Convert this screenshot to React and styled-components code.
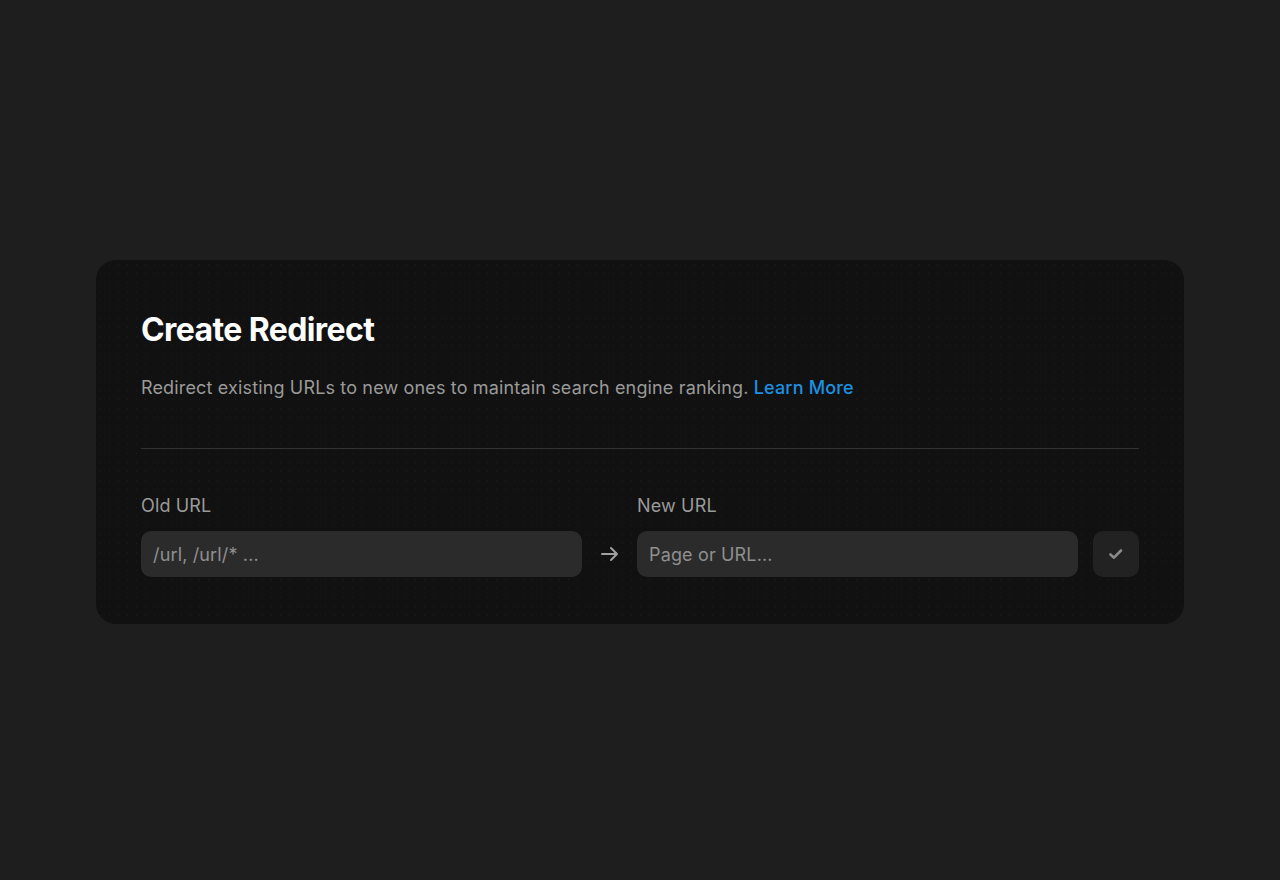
import React from "react";
import styled, { createGlobalStyle } from "styled-components";

const Global = createGlobalStyle`
  html, body { margin: 0; padding: 0; background: #1e1e1e; }
  body { font-family: Inter, "Noto Sans", sans-serif; -webkit-font-smoothing: antialiased; }
`;

const Page = styled.div`
  width: 1280px;
  height: 880px;
  box-sizing: border-box;
  padding: 260px 96px 0;
`;

const Card = styled.div`
  width: 100%;
  box-sizing: border-box;
  background-color: #111111;
  background-image: radial-gradient(rgba(255, 255, 255, 0.06) 0.8px, transparent 1px);
  background-size: 9px 9px;
  border-radius: 20px;
  padding: 48px 45px 47px;
`;

const Title = styled.h1`
  margin: 0;
  font-size: 32px;
  line-height: 44px;
  font-weight: 700;
  letter-spacing: -0.6px;
  color: #ffffff;
`;

const Description = styled.p`
  margin: 23px 0 0;
  font-size: 18px;
  line-height: 26px;
  letter-spacing: 0.15px;
  color: #9a9a9a;
`;

const Link = styled.a`
  color: #1e90e0;
  text-decoration: none;
  font-weight: 500;
`;

const Divider = styled.hr`
  border: none;
  height: 1px;
  background: #333333;
  margin: 47px 0 46px;
`;

const Form = styled.div`
  display: grid;
  grid-template-columns: 1fr 55px 1fr 61px;
  grid-template-rows: auto 46px;
  row-gap: 14px;
`;

const Label = styled.label`
  font-size: 18px;
  line-height: 22px;
  letter-spacing: 0.15px;
  color: #9a9a9a;
  grid-column: ${(p) => p.$col};
`;

const Input = styled.input`
  box-sizing: border-box;
  width: 100%;
  height: 46px;
  background: #2b2b2b;
  border: none;
  border-radius: 10px;
  padding: 0 12px;
  font-family: Inter, "Noto Sans", sans-serif;
  font-size: 18px;
  letter-spacing: 0.15px;
  color: #ddd;
  outline: none;
  &::placeholder { color: #8f8f8f; }
`;

const ArrowCell = styled.div`
  display: flex;
  align-items: center;
  justify-content: center;
  color: #a0a0a0;
`;

const ButtonCell = styled.div`
  display: flex;
  justify-content: flex-end;
`;

const SaveButton = styled.button`
  width: 46px;
  height: 46px;
  border: none;
  border-radius: 10px;
  background: #222222;
  display: flex;
  align-items: center;
  justify-content: center;
  color: #8a8a8a;
  padding: 0;
  cursor: pointer;
`;

export default function App() {
  return (
    <>
      <Global />
      <Page>
        <Card>
          <Title>Create Redirect</Title>
          <Description>
            Redirect existing URLs to new ones to maintain search engine ranking.{" "}
            <Link href="#">Learn More</Link>
          </Description>
          <Divider />
          <Form>
            <Label $col="1">Old URL</Label>
            <Label $col="3">New URL</Label>
            <Input placeholder="/url, /url/* ..." style={{ gridColumn: 1, gridRow: 2 }} />
            <ArrowCell style={{ gridColumn: 2, gridRow: 2 }}>
              <svg width="20" height="20" viewBox="0 0 20 20" fill="none" stroke="currentColor" strokeWidth="2" strokeLinecap="round" strokeLinejoin="round">
                <path d="M2 10h15M11 4l6 6-6 6" />
              </svg>
            </ArrowCell>
            <Input placeholder="Page or URL..." style={{ gridColumn: 3, gridRow: 2 }} />
            <ButtonCell style={{ gridColumn: 4, gridRow: 2 }}>
              <SaveButton aria-label="Save">
                <svg width="18" height="18" viewBox="0 0 18 18" fill="none" stroke="currentColor" strokeWidth="2.6" strokeLinecap="round" strokeLinejoin="round">
                  <path d="M3.5 9.5l3.5 3.2L14 5.5" />
                </svg>
              </SaveButton>
            </ButtonCell>
          </Form>
        </Card>
      </Page>
    </>
  );
}
